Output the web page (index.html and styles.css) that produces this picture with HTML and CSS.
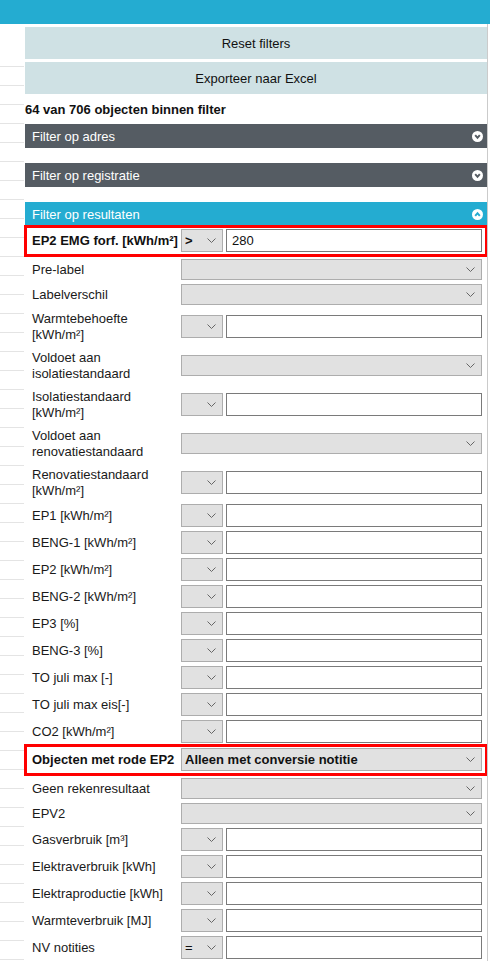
FILE: index.html
```html
<!DOCTYPE html>
<html lang="nl">
  <head>
    <meta charset="UTF-8" />
    <meta name="viewport" content="width=device-width, initial-scale=1.0" />
    <title>Filters</title>
    <link rel="stylesheet" href="styles.css">
  </head>
  <body>
    <div class="topbar"></div>
    <div class="page">
      <div class="side"></div>
      <div class="panel">
        <button class="action">Reset filters</button>
        <button class="action">Exporteer naar Excel</button>
        <div class="count">64 van 706 objecten binnen filter</div>

        <div class="section-head">
          <span>Filter op adres</span>
          <svg class="toggle" width="11" height="11" viewBox="0 0 11 11"><circle cx="5.5" cy="5.5" r="5.5" fill="#fff"/><path d="M3.2 4.2 L5.5 6.8 L7.8 4.2" fill="none" stroke="#555c63" stroke-width="2"/></svg>
        </div>
        <div class="section-head">
          <span>Filter op registratie</span>
          <svg class="toggle" width="11" height="11" viewBox="0 0 11 11"><circle cx="5.5" cy="5.5" r="5.5" fill="#fff"/><path d="M3.2 4.2 L5.5 6.8 L7.8 4.2" fill="none" stroke="#555c63" stroke-width="2"/></svg>
        </div>
        <div class="section-head open">
          <span>Filter op resultaten</span>
          <svg class="toggle" width="11" height="11" viewBox="0 0 11 11"><circle cx="5.5" cy="5.5" r="5.5" fill="#fff"/><path d="M3.2 6.8 L5.5 4.2 L7.8 6.8" fill="none" stroke="#24acd1" stroke-width="2"/></svg>
        </div>

        <div class="filters">
          <div class="row highlight">
            <label>EP2 EMG forf. [kWh/m²]</label>
            <select class="op"><option>&gt;</option></select>
            <input type="text" value="280" />
          </div>
          <div class="row">
            <label>Pre-label</label>
            <select class="wide"><option></option></select>
          </div>
          <div class="row">
            <label>Labelverschil</label>
            <select class="wide"><option></option></select>
          </div>
          <div class="row">
            <label>Warmtebehoefte [kWh/m²]</label>
            <select class="op"><option></option></select>
            <input type="text" />
          </div>
          <div class="row">
            <label>Voldoet aan isolatiestandaard</label>
            <select class="wide"><option></option></select>
          </div>
          <div class="row">
            <label>Isolatiestandaard [kWh/m²]</label>
            <select class="op"><option></option></select>
            <input type="text" />
          </div>
          <div class="row">
            <label>Voldoet aan renovatiestandaard</label>
            <select class="wide"><option></option></select>
          </div>
          <div class="row">
            <label>Renovatiestandaard [kWh/m²]</label>
            <select class="op"><option></option></select>
            <input type="text" />
          </div>
          <div class="row">
            <label>EP1 [kWh/m²]</label>
            <select class="op"><option></option></select>
            <input type="text" />
          </div>
          <div class="row">
            <label>BENG-1 [kWh/m²]</label>
            <select class="op"><option></option></select>
            <input type="text" />
          </div>
          <div class="row">
            <label>EP2 [kWh/m²]</label>
            <select class="op"><option></option></select>
            <input type="text" />
          </div>
          <div class="row">
            <label>BENG-2 [kWh/m²]</label>
            <select class="op"><option></option></select>
            <input type="text" />
          </div>
          <div class="row">
            <label>EP3 [%]</label>
            <select class="op"><option></option></select>
            <input type="text" />
          </div>
          <div class="row">
            <label>BENG-3 [%]</label>
            <select class="op"><option></option></select>
            <input type="text" />
          </div>
          <div class="row">
            <label>TO juli max [-]</label>
            <select class="op"><option></option></select>
            <input type="text" />
          </div>
          <div class="row">
            <label>TO juli max eis[-]</label>
            <select class="op"><option></option></select>
            <input type="text" />
          </div>
          <div class="row">
            <label>CO2 [kWh/m²]</label>
            <select class="op"><option></option></select>
            <input type="text" />
          </div>
          <div class="row highlight">
            <label>Objecten met rode EP2</label>
            <select class="wide"><option>Alleen met conversie notitie</option></select>
          </div>
          <div class="row">
            <label>Geen rekenresultaat</label>
            <select class="wide"><option></option></select>
          </div>
          <div class="row">
            <label>EPV2</label>
            <select class="wide"><option></option></select>
          </div>
          <div class="row">
            <label>Gasverbruik [m³]</label>
            <select class="op"><option></option></select>
            <input type="text" />
          </div>
          <div class="row">
            <label>Elektraverbruik [kWh]</label>
            <select class="op"><option></option></select>
            <input type="text" />
          </div>
          <div class="row">
            <label>Elektraproductie [kWh]</label>
            <select class="op"><option></option></select>
            <input type="text" />
          </div>
          <div class="row">
            <label>Warmteverbruik [MJ]</label>
            <select class="op"><option></option></select>
            <input type="text" />
          </div>
          <div class="row">
            <label>NV notities</label>
            <select class="op"><option>=</option></select>
            <input type="text" />
          </div>
        </div>
      </div>
      <div class="scroll-edge"></div>
    </div>
  </body>
</html>
```

FILE: styles.css
```css
html,
body {
  margin: 0;
  padding: 0;
}
body {
  background-color: white;
  font-family: "Liberation Sans", Arial, sans-serif;
  font-size: 13px;
  color: #1a1a1a;
}

.topbar {
  height: 24px;
  background-color: #24acd1;
}

.page {
  display: flex;
  align-items: stretch;
}

/* rows of the table behind the filter panel */
.side {
  width: 25px;
  flex: 0 0 25px;
  padding-top: 24px;
  background-image: repeating-linear-gradient(
    to bottom,
    transparent 0,
    transparent 18px,
    #e4e4e4 18px,
    #e4e4e4 19px
  );
  background-origin: content-box;
  background-clip: content-box;
  background-size: 24px 19px;
  background-repeat: repeat-y;
}

.panel {
  width: 462px;
  flex: 0 0 462px;
  padding-top: 3px;
}

.scroll-edge {
  flex: 1;
  border-left: 1px solid #cbcbcb;
}

.action {
  display: block;
  width: 100%;
  height: 32px;
  margin: 0 0 3px;
  border: none;
  background-color: #cfe1e4;
  font-family: inherit;
  font-size: 13px;
  color: #111;
  cursor: pointer;
}

.count {
  height: 30px;
  line-height: 31px;
  margin-top: -3px;
  font-weight: bold;
  color: #111;
}

.section-head {
  display: flex;
  align-items: center;
  justify-content: space-between;
  height: 24px;
  padding: 0 4px 0 7px;
  margin-bottom: 15px;
  background-color: #555c63;
  color: white;
}
.section-head.open {
  background-color: #24acd1;
  margin-bottom: 0;
}
.toggle {
  display: block;
}

.row {
  display: flex;
  align-items: center;
  padding: 0 5px 0 7px;
}
.row label {
  flex: 0 0 149px;
  width: 149px;
  line-height: 16px;
  padding: 3.5px 0;
}

select,
input {
  box-sizing: border-box;
  font-family: inherit;
  font-size: 13px;
  color: #111;
  margin: 2px 0;
}
select {
  appearance: none;
  -webkit-appearance: none;
  border: 1px solid #adadad;
  border-radius: 0;
  background-color: #e1e1e1;
  background-image: url("data:image/svg+xml,%3Csvg xmlns='http://www.w3.org/2000/svg' width='9' height='5'%3E%3Cpath d='M0.5 0.5 L4.5 4.5 L8.5 0.5' fill='none' stroke='%23666' stroke-width='1'/%3E%3C/svg%3E");
  background-repeat: no-repeat;
  background-position: right 6px center;
  padding: 0 3px;
}
select.op {
  flex: 0 0 42px;
  width: 42px;
  height: 23px;
}
select.wide {
  flex: 1;
  height: 21px;
}
input {
  flex: 1;
  min-width: 0;
  height: 23px;
  margin-left: 3px;
  padding: 0 5px;
  border: 1px solid #7a7a7a;
  border-radius: 0;
  background-color: white;
}

.highlight {
  border: 3px solid red;
  margin: -1px -1px 0;
  padding: 1px 3px 2px 5px;
}
.highlight label {
  font-weight: bold;
  white-space: nowrap;
  color: #111;
}
.highlight select {
  font-weight: bold;
  height: 23px;
  margin-top: 0;
  margin-bottom: 0;
}
.highlight input {
  margin-top: 0;
  margin-bottom: 0;
}
```
